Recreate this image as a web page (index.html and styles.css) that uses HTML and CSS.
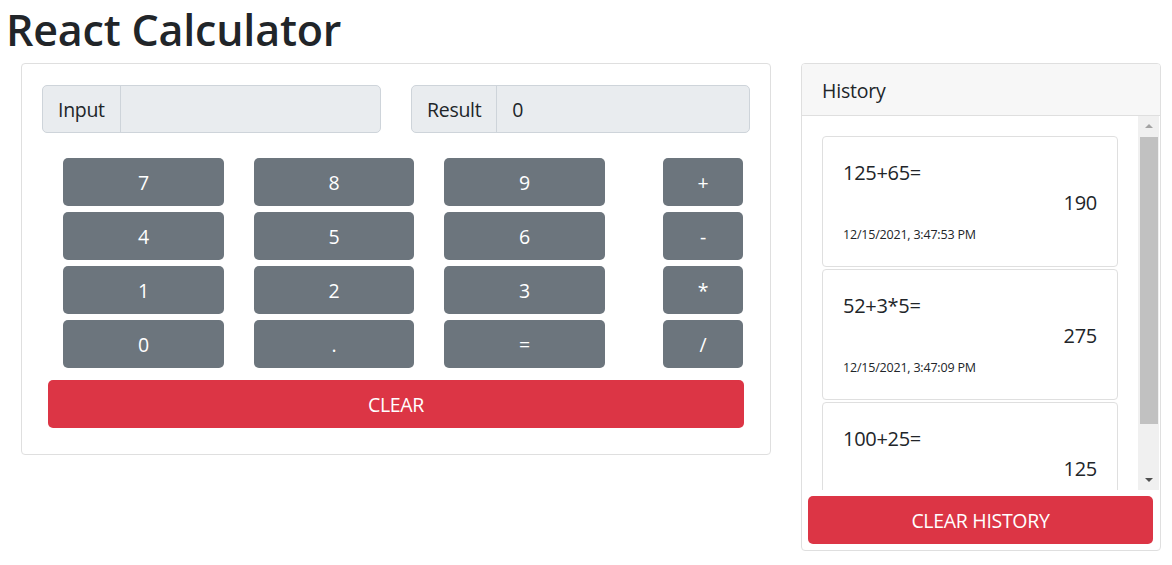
FILE: index.html
```html
<!DOCTYPE html>
<html lang="en">
<head>
<meta charset="utf-8">
<title>React Calculator</title>
<link rel="stylesheet" href="styles.css">
</head>
<body>
<h1 class="title">React Calculator</h1>
<div class="layout">
  <section class="card calc">
    <div class="io">
      <div class="igroup"><span class="ilabel">Input</span><span class="ifield"></span></div>
      <div class="igroup"><span class="ilabel">Result</span><span class="ifield">0</span></div>
    </div>
    <div class="keys">
      <button class="btn key">7</button>
      <button class="btn key">8</button>
      <button class="btn key">9</button>
      <button class="btn key op">+</button>
      <button class="btn key">4</button>
      <button class="btn key">5</button>
      <button class="btn key">6</button>
      <button class="btn key op">-</button>
      <button class="btn key">1</button>
      <button class="btn key">2</button>
      <button class="btn key">3</button>
      <button class="btn key op">*</button>
      <button class="btn key">0</button>
      <button class="btn key">.</button>
      <button class="btn key">=</button>
      <button class="btn key op">/</button>
    </div>
    <button class="btn danger clear">CLEAR</button>
  </section>
  <aside class="card history">
    <div class="history-header">History</div>
    <div class="history-body">
      <div class="history-list">
        <div class="entry">
          <div class="expr">125+65=</div>
          <div class="res">190</div>
          <div class="date">12/15/2021, 3:47:53 PM</div>
        </div>
        <div class="entry">
          <div class="expr">52+3*5=</div>
          <div class="res">275</div>
          <div class="date">12/15/2021, 3:47:09 PM</div>
        </div>
        <div class="entry">
          <div class="expr">100+25=</div>
          <div class="res">125</div>
        </div>
      </div>
      <div class="scrollbar">
        <span class="sb-btn"><span class="tri up"></span></span>
        <span class="sb-track"><span class="sb-thumb"></span></span>
        <span class="sb-btn"><span class="tri down"></span></span>
      </div>
    </div>
    <div class="history-footer">
      <button class="btn danger clear-history">CLEAR HISTORY</button>
    </div>
  </aside>
</div>
</body>
</html>
```
FILE: styles.css
```css
* { box-sizing: border-box; }
html, body { margin: 0; padding: 0; background: #fff; }
body {
  font-family: "Open Sans", "Noto Sans", sans-serif;
  color: #212529;
  width: 1172px;
  height: 565px;
  overflow: hidden;
}
.title {
  margin: 0;
  padding: 0 0 0 6px;
  height: 63px;
  font-size: 43px;
  font-weight: 600;
  line-height: 59px;
  letter-spacing: -0.2px;
}
.layout {
  display: flex;
  align-items: flex-start;
  gap: 30px;
  padding-left: 21px;
}
.card {
  border: 1px solid #dfdfdf;
  border-radius: 4px;
  background: #fff;
}
.calc {
  width: 750px;
  padding: 21px 20px 26px;
}
.io {
  display: grid;
  grid-template-columns: 1fr 1fr;
  gap: 30px;
}
.igroup {
  display: flex;
  height: 48px;
  border: 1px solid #ced4da;
  border-radius: 5px;
  background: #e9ecef;
  font-size: 19.5px;
  letter-spacing: -0.3px;
}
.ilabel {
  display: flex;
  align-items: center;
  padding: 0 15px;
  border-right: 1px solid #ced4da;
}
.ifield {
  flex: 1;
  display: flex;
  align-items: center;
  padding: 0 15px;
}
.btn {
  font-family: inherit;
  border: 0;
  border-radius: 5px;
  color: #fff;
  font-size: 19.5px;
  letter-spacing: -0.3px;
  height: 48px;
  padding: 0;
  cursor: pointer;
}
.keys {
  display: grid;
  grid-template-columns: 161px 160px 161px 108px;
  grid-auto-rows: 48px;
  column-gap: 30px;
  row-gap: 6px;
  margin-top: 25px;
  padding-left: 21px;
}
.key { background: #6c757d; }
.key.op { width: 80px; justify-self: end; }
.danger { background: #dc3545; }
.clear {
  display: block;
  width: calc(100% - 12px);
  margin: 12px 6px 0;
}
.history {
  width: 360px;
  height: 488px;
  display: flex;
  flex-direction: column;
  overflow: hidden;
}
.history-header {
  height: 52px;
  padding: 12px 20px 0;
  background: #f7f7f7;
  border-bottom: 1px solid #dfdfdf;
  font-size: 19.5px;
  line-height: 30px;
  letter-spacing: -0.2px;
}
.history-body {
  height: 375px;
  display: flex;
  overflow: hidden;
}
.history-list {
  flex: 1;
  padding: 20px 0 0 20px;
  overflow: hidden;
}
.entry {
  width: 296px;
  height: 131px;
  margin-bottom: 2px;
  padding: 21px 20px 0;
  border: 1px solid #dfdfdf;
  border-radius: 4px;
}
.expr, .res {
  font-size: 20px;
  line-height: 30px;
  letter-spacing: -0.3px;
}
.res { text-align: right; }
.date {
  margin-top: 8px;
  font-size: 12.5px;
  line-height: 18px;
  letter-spacing: -0.2px;
}
.scrollbar {
  width: 21px;
  margin-right: 1px;
  display: flex;
  flex-direction: column;
  background: #f0f0f0;
}
.sb-btn {
  height: 21px;
  display: flex;
  align-items: center;
  justify-content: center;
  padding-left: 1px;
}
.tri {
  width: 0;
  height: 0;
  border-left: 4px solid transparent;
  border-right: 4px solid transparent;
}
.tri.up { border-bottom: 4px solid #a3a3a3; }
.tri.down { border-top: 4px solid #505050; }
.sb-track {
  flex: 1;
  padding: 0 1px 0 2px;
}
.sb-thumb {
  display: block;
  height: 287px;
  background: #c1c1c1;
}
.history-footer {
  padding: 6px 7px 6px 6px;
}
.clear-history {
  display: block;
  width: 100%;
}
```
